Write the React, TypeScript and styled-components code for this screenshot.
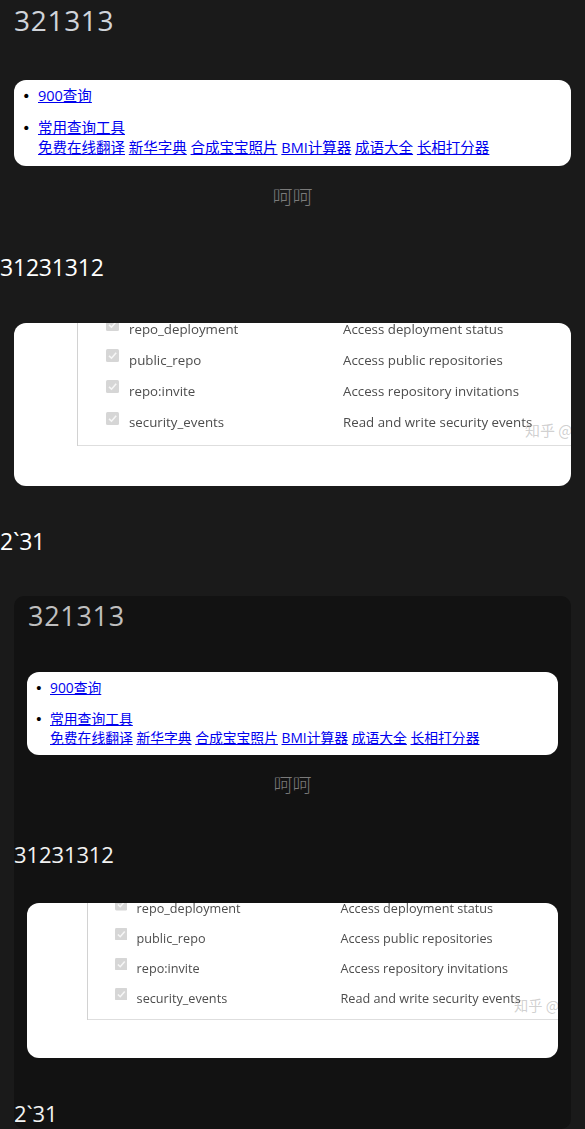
import React from 'react';
import styled, { createGlobalStyle } from 'styled-components';

const GlobalStyle = createGlobalStyle`
  html, body { margin: 0; padding: 0; background: #1a1a1a; }
  body { font-family: "Open Sans", "Noto Sans CJK SC", sans-serif; }
`;

type Metrics = {
  s: number;
  hSize: number;
  hColor: string;
  cardTop: number;
  cardMargin: number;
  linkSize: number;
  linkLine: number;
  ulPad: string;
  heheSize: number;
  heheLine: number;
  heheTop: number;
  numSize: number;
  numLine: number;
  numSpacing: number;
  numTop: number;
  numColor: string;
  imgTop: number;
  tailTop: number;
};

const TOP: Metrics = {
  s: 1,
  hSize: 28,
  hColor: '#d0d4da',
  cardTop: 40,
  cardMargin: 14,
  linkSize: 14.5,
  linkLine: 20,
  ulPad: '6px 0 8px 24px',
  heheSize: 20,
  heheLine: 28,
  heheTop: 17,
  numSize: 23,
  numLine: 32,
  numSpacing: -0.2,
  numTop: 40,
  numColor: '#ffffff',
  imgTop: 40,
  tailTop: 39,
};

const NESTED: Metrics = {
  s: 0.953,
  hSize: 27,
  hColor: '#bfbfbf',
  cardTop: 36,
  cardMargin: 13,
  linkSize: 13.8,
  linkLine: 19,
  ulPad: '5.5px 0 8.5px 23px',
  heheSize: 19,
  heheLine: 27,
  heheTop: 15,
  numSize: 22,
  numLine: 31,
  numSpacing: -0.1,
  numTop: 42,
  numColor: '#f2f2f2',
  imgTop: 33,
  tailTop: 39.5,
};

type MP = { $m: Metrics };
const u = (n: number) => (p: MP) => `${(n * p.$m.s).toFixed(2)}px`;

const Page = styled.div`
  width: 585px;
`;

const Inset = styled.div`
  margin: 39px 14px 0 14px;
  background: #121212;
  border-radius: 10px;
  overflow: hidden;
`;

const Heading = styled.div<MP>`
  margin: 0 0 0 14px;
  font-size: ${(p) => p.$m.hSize}px;
  line-height: 40px;
  letter-spacing: 0.7px;
  color: ${(p) => p.$m.hColor};
  font-weight: 400;
`;

const LinkCard = styled.div<MP>`
  margin: ${(p) => p.$m.cardTop}px ${(p) => p.$m.cardMargin}px 0;
  background: #ffffff;
  border-radius: 12px;
`;

const LinkList = styled.ul<MP>`
  margin: 0;
  padding: ${(p) => p.$m.ulPad};
  list-style: disc outside;
  color: #000;
  font-size: ${(p) => p.$m.linkSize}px;
  line-height: ${(p) => p.$m.linkLine}px;
  font-family: "Open Sans", "Noto Sans CJK SC", sans-serif;
`;

const Item = styled.li`
  &::marker {
    content: "\\2022\\00a0\\2009";
    font-family: "DejaVu Sans", sans-serif;
  }
  & + & {
    margin-top: 12px;
  }
`;

const Link = styled.a`
  color: #0000ee;
  text-decoration: underline;
`;

const Caption = styled.div<MP>`
  margin-top: ${(p) => p.$m.heheTop}px;
  text-align: center;
  font-size: ${(p) => p.$m.heheSize}px;
  line-height: ${(p) => p.$m.heheLine}px;
  color: #7a7a7a;
  font-family: "Noto Sans CJK SC", sans-serif;
  font-weight: 300;
`;

const Title = styled.div<MP & { $tail?: boolean }>`
  margin-top: ${(p) => (p.$tail ? p.$m.tailTop : p.$m.numTop)}px;
  font-size: ${(p) => p.$m.numSize}px;
  line-height: ${(p) => p.$m.numLine}px;
  letter-spacing: ${(p) => p.$m.numSpacing}px;
  color: ${(p) => p.$m.numColor};
`;

const ImageCard = styled.div<MP>`
  position: relative;
  margin: ${(p) => p.$m.imgTop}px ${(p) => p.$m.cardMargin}px 0;
  height: ${u(163)};
  background: #ffffff;
  border-radius: 12px;
  overflow: hidden;
  padding-left: ${u(63)};
  box-sizing: border-box;
`;

const Frame = styled.div<MP>`
  height: ${u(133)};
  border-left: 1.5px solid #d2d2d2;
`;

const ScopeTable = styled.div<MP>`
  margin-top: ${u(-10)};
  height: ${u(133)};
  box-sizing: border-box;
  border-bottom: 1.5px solid #dedede;
  display: grid;
  grid-template-columns: ${u(12)} ${u(203)} auto;
  grid-auto-rows: ${u(31.2)};
  column-gap: ${u(11)};
  padding-left: ${u(28)};
  align-items: center;
  font-family: "Open Sans", sans-serif;
  font-size: ${u(13.3)};
  color: #4d4d4d;
  white-space: nowrap;
  filter: blur(0.3px);
`;

const Check = styled.svg<MP>`
  width: ${u(13)};
  height: ${u(13)};
  margin-bottom: ${u(8)};
  display: block;
`;

const Watermark = styled.div<MP>`
  position: absolute;
  left: ${u(511)};
  top: ${u(96)};
  font-family: "Noto Sans CJK SC", sans-serif;
  font-size: ${u(15)};
  color: rgba(150, 150, 150, 0.45);
  white-space: nowrap;
`;

const scopes: [string, string][] = [
  ['repo_deployment', 'Access deployment status'],
  ['public_repo', 'Access public repositories'],
  ['repo:invite', 'Access repository invitations'],
  ['security_events', 'Read and write security events'],
];

const tools = ['免费在线翻译', '新华字典', '合成宝宝照片', 'BMI计算器', '成语大全', '长相打分器'];

function CheckBox({ m }: { m: Metrics }) {
  return (
    <Check $m={m} viewBox="0 0 13 13">
      <rect x="0" y="0" width="13" height="13" rx="1.5" fill="#d6d6d6" />
      <path d="M3 6.8 L5.5 9.2 L10.2 3.8" stroke="#f6f6f6" strokeWidth="1.6" fill="none" />
    </Check>
  );
}

function Section({ m }: { m: Metrics }) {
  return (
    <>
      <Heading $m={m}>321313</Heading>
      <LinkCard $m={m}>
        <LinkList $m={m}>
          <Item>
            <Link href="#">900查询</Link>
          </Item>
          <Item>
            <Link href="#">常用查询工具</Link>
            <br />
            {tools.map((t, i) => (
              <React.Fragment key={t}>
                {i > 0 && ' '}
                <Link href="#">{t}</Link>
              </React.Fragment>
            ))}
          </Item>
        </LinkList>
      </LinkCard>
      <Caption $m={m}>呵呵</Caption>
      <Title $m={m}>31231312</Title>
      <ImageCard $m={m}>
        <Frame $m={m}>
          <ScopeTable $m={m}>
            {scopes.map(([name, desc]) => (
              <React.Fragment key={name}>
                <CheckBox m={m} />
                <span>{name}</span>
                <span>{desc}</span>
              </React.Fragment>
            ))}
          </ScopeTable>
        </Frame>
        <Watermark $m={m}>知乎 @</Watermark>
      </ImageCard>
      <Title $m={m} $tail>
        2`31
      </Title>
    </>
  );
}

export default function App() {
  return (
    <Page>
      <GlobalStyle />
      <Section m={TOP} />
      <Inset>
        <Section m={NESTED} />
      </Inset>
    </Page>
  );
}
